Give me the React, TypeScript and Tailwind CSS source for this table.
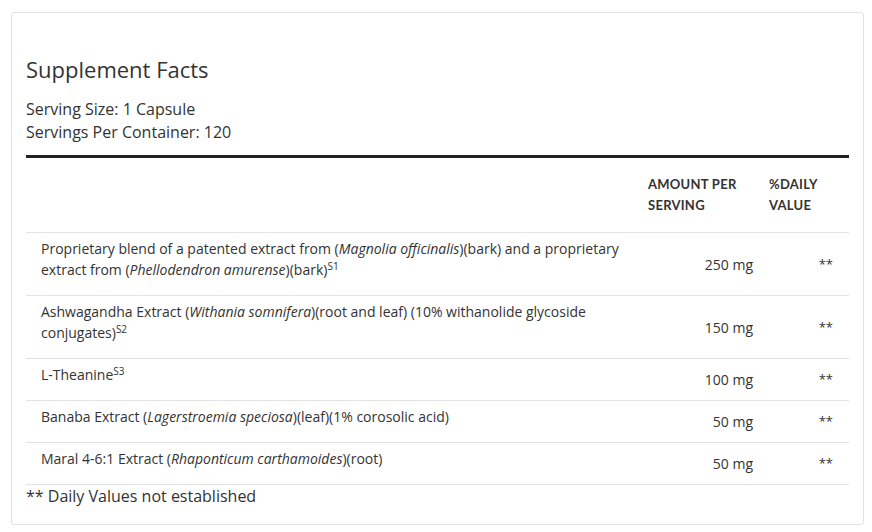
import React from "react";

interface Row {
  id: number;
  name: React.ReactNode;
  amount: string;
}

const rows: Row[] = [
  {
    id: 1,
    name: (
      <>
        Proprietary blend of a patented extract from (<i>Magnolia officinalis</i>)(bark) and a proprietary
        extract from (<i>Phellodendron amurense</i>)(bark)<sup className="text-[10px]">S1</sup>
      </>
    ),
    amount: "250 mg",
  },
  {
    id: 2,
    name: (
      <>
        Ashwagandha Extract (<i>Withania somnifera</i>)(root and leaf) (10% withanolide glycoside
        conjugates)<sup className="text-[10px]">S2</sup>
      </>
    ),
    amount: "150 mg",
  },
  {
    id: 3,
    name: (
      <>
        L-Theanine<sup className="text-[10px]">S3</sup>
      </>
    ),
    amount: "100 mg",
  },
  {
    id: 4,
    name: (
      <>
        Banaba Extract (<i>Lagerstroemia speciosa</i>)(leaf)(1% corosolic acid)
      </>
    ),
    amount: "50 mg",
  },
  {
    id: 5,
    name: (
      <>
        Maral 4-6:1 Extract (<i>Rhaponticum carthamoides</i>)(root)
      </>
    ),
    amount: "50 mg",
  },
];

const App = () => {
  return (
    <div className="min-h-[532px] bg-white pt-[12px] pl-[11px] font-['Open_Sans',sans-serif] text-[#333]">
      <div className="w-[853px] h-[513px] border border-[#e2e2e2] rounded-[3px] px-[14px] pt-[41px]">
        <h2 className="text-[22px] leading-[30px] mb-[14px]">Supplement Facts</h2>
        <p className="text-[16px] leading-[23px]">Serving Size: 1 Capsule</p>
        <p className="text-[16px] leading-[23px]">Servings Per Container: 120</p>
        <div className="mt-[11px] border-t-[3px] border-[#222]">
          <div className="grid grid-cols-[1fr_121px_80px] border-b border-[#e2e2e2] py-4 text-[13px] leading-[21px] font-bold uppercase tracking-[0.02em] font-['Lato',sans-serif]">
            <div />
            <div>
              Amount per
              <br />
              serving
            </div>
            <div>
              %Daily
              <br />
              value
            </div>
          </div>
          {rows.map((row) => (
            <div
              key={row.id}
              className="grid grid-cols-[1fr_121px_80px] items-center border-b border-[#e2e2e2] text-[14px] leading-[21px]"
            >
              <div className="pl-[15px] pt-[5px] pb-[15px] pr-4 self-start">{row.name}</div>
              <div className="text-right pr-4">{row.amount}</div>
              <div className="text-right pr-4 text-[13px]">**</div>
            </div>
          ))}
        </div>
        <p className="text-[16px] leading-[23px]">** Daily Values not established</p>
      </div>
    </div>
  );
};

export default App;
